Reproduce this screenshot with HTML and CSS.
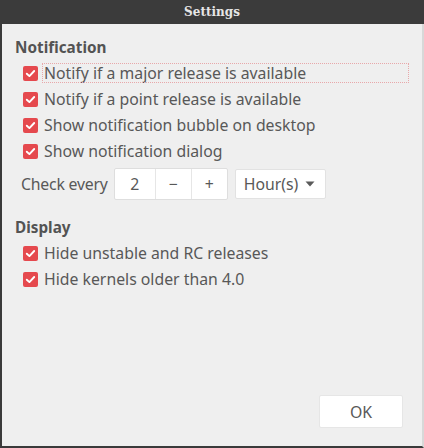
FILE: index.html
```html
<!DOCTYPE html>
<html>
<head>
<meta charset="utf-8">
<link rel="stylesheet" href="styles.css">
</head>
<body>
<div class="window">
  <div class="titlebar">Settings</div>
  <div class="content">
    <div class="heading">Notification</div>
    <div class="checks">
      <label class="check focused"><span class="box"><svg viewBox="0 0 15 15" width="15" height="15"><path d="M3.8 7.7 L6.4 10.1 L11.2 5" fill="none" stroke="#fff" stroke-width="1.9" stroke-linecap="round" stroke-linejoin="round"/></svg></span><span class="label">Notify if a major release is available</span></label>
      <label class="check"><span class="box"><svg viewBox="0 0 15 15" width="15" height="15"><path d="M3.8 7.7 L6.4 10.1 L11.2 5" fill="none" stroke="#fff" stroke-width="1.9" stroke-linecap="round" stroke-linejoin="round"/></svg></span><span class="label">Notify if a point release is available</span></label>
      <label class="check"><span class="box"><svg viewBox="0 0 15 15" width="15" height="15"><path d="M3.8 7.7 L6.4 10.1 L11.2 5" fill="none" stroke="#fff" stroke-width="1.9" stroke-linecap="round" stroke-linejoin="round"/></svg></span><span class="label">Show notification bubble on desktop</span></label>
      <label class="check"><span class="box"><svg viewBox="0 0 15 15" width="15" height="15"><path d="M3.8 7.7 L6.4 10.1 L11.2 5" fill="none" stroke="#fff" stroke-width="1.9" stroke-linecap="round" stroke-linejoin="round"/></svg></span><span class="label">Show notification dialog</span></label>
    </div>
    <div class="every">
      <span class="every-label">Check every</span>
      <div class="spin">
        <span class="spin-value">2</span>
        <span class="spin-btn">&#8722;</span>
        <span class="spin-btn">+</span>
      </div>
      <div class="combo">
        <span>Hour(s)</span>
        <svg class="arrow" viewBox="0 0 10 6" width="10" height="6"><path d="M0.5 0.5 L9.5 0.5 L5 5.5 Z" fill="#5a5a5a"/></svg>
      </div>
    </div>
    <div class="heading heading-display">Display</div>
    <div class="checks">
      <label class="check"><span class="box"><svg viewBox="0 0 15 15" width="15" height="15"><path d="M3.8 7.7 L6.4 10.1 L11.2 5" fill="none" stroke="#fff" stroke-width="1.9" stroke-linecap="round" stroke-linejoin="round"/></svg></span><span class="label">Hide unstable and RC releases</span></label>
      <label class="check"><span class="box"><svg viewBox="0 0 15 15" width="15" height="15"><path d="M3.8 7.7 L6.4 10.1 L11.2 5" fill="none" stroke="#fff" stroke-width="1.9" stroke-linecap="round" stroke-linejoin="round"/></svg></span><span class="label">Hide kernels older than 4.0</span></label>
    </div>
    <div class="spacer"></div>
    <div class="footer">
      <button class="ok">OK</button>
    </div>
  </div>
</div>
</body>
</html>
```

FILE: styles.css
```css
html, body {
  margin: 0;
  padding: 0;
}
body {
  width: 424px;
  height: 448px;
  overflow: hidden;
  background: #efefef;
  font-family: "Noto Sans", "Open Sans", sans-serif;
}
.window {
  width: 424px;
  height: 448px;
  box-sizing: border-box;
  border-left: 2px solid #3a3a3a;
  border-bottom: 2px solid #3a3a3a;
  border-right: 2px solid #d8d8d8;
  display: flex;
  flex-direction: column;
  background: #efefef;
}
.titlebar {
  height: 24px;
  background: #3b3b3b;
  color: #e6e6e6;
  font-family: "DejaVu Serif", serif;
  font-weight: bold;
  font-size: 12px;
  display: flex;
  align-items: center;
  justify-content: center;
  margin-left: -2px;
  margin-right: -2px;
  flex: none;
}
.content {
  flex: 1;
  display: flex;
  flex-direction: column;
  padding: 13px 19px 18px 13px;
  color: #585858;
  font-size: 15.8px;
}
.heading {
  font-weight: bold;
  font-size: 15.3px;
  line-height: 20px;
  color: #535353;
}
.heading-display {
  margin-top: 17px;
}
.checks {
  display: flex;
  flex-direction: column;
  margin-top: 3px;
}
.check {
  display: flex;
  align-items: center;
  height: 26px;
  padding-left: 8px;
  gap: 5px;
}
.box {
  width: 15px;
  height: 15px;
  border-radius: 2px;
  background: #e5494e;
  display: flex;
  align-items: center;
  justify-content: center;
  flex: none;
}
.box svg { display: block; }
.label {
  line-height: 18px;
  padding: 0 1px;
}
.focused .label {
  flex: 1;
  margin-right: -5px;
  outline: 1px dotted #e8a8aa;
}
.every {
  display: flex;
  align-items: center;
  margin-top: 4px;
  padding-left: 6px;
}
.every-label {
  margin-right: 6px;
  letter-spacing: -0.2px;
}
.spin {
  display: flex;
  height: 30px;
  background: #fff;
  border: 1px solid #dedede;
  border-radius: 2px;
}
.spin-value {
  width: 40px;
  display: flex;
  align-items: center;
  justify-content: center;
  border-right: 1px solid #e6e6e6;
}
.spin-btn {
  width: 35px;
  display: flex;
  align-items: center;
  justify-content: center;
}
.spin-btn + .spin-btn {
  border-left: 1px solid #e6e6e6;
}
.combo {
  margin-left: 7px;
  height: 30px;
  width: 91px;
  box-sizing: border-box;
  background: #fff;
  border: 1px solid #e2e2e2;
  border-radius: 2px;
  display: flex;
  align-items: center;
  justify-content: space-between;
  padding: 0 10px 0 8px;
}
.spacer { flex: 1; }
.footer {
  display: flex;
  justify-content: flex-end;
}
.ok {
  width: 84px;
  height: 33px;
  background: #fff;
  border: 1px solid #e6e6e6;
  border-radius: 2px;
  font-family: inherit;
  font-size: 15.8px;
  color: #585858;
}
```
